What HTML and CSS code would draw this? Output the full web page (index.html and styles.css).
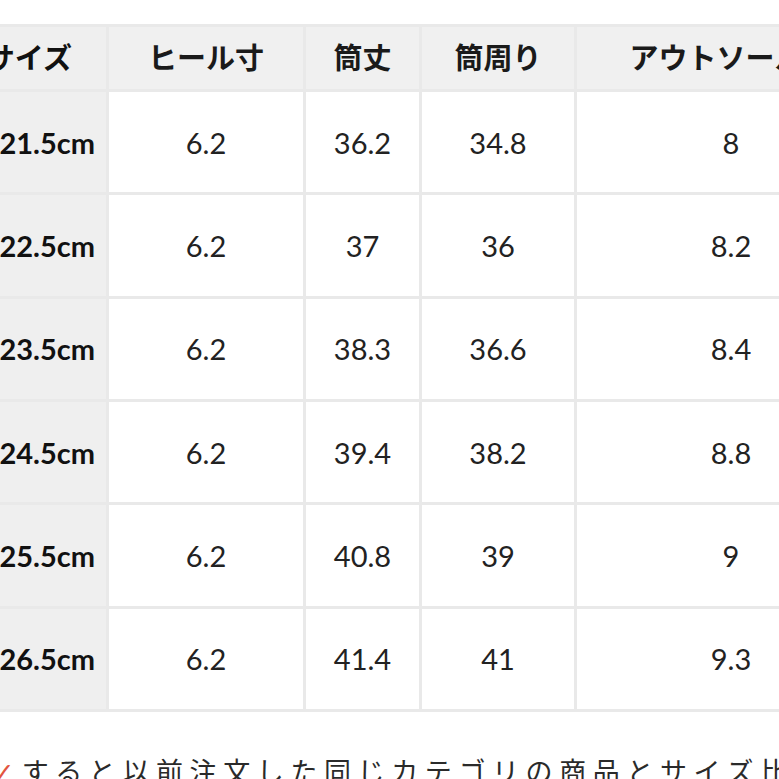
FILE: index.html
```html
<!DOCTYPE html>
<html lang="ja">
<head>
<meta charset="utf-8">
<title>サイズ表</title>
<link rel="stylesheet" href="styles.css">
</head>
<body>
<div class="page">
  <div class="size-table">
    <div class="cell head first">サイズ</div>
    <div class="cell head">ヒール寸</div>
    <div class="cell head">筒丈</div>
    <div class="cell head">筒周り</div>
    <div class="cell head">アウトソール長</div>

    <div class="cell first">21.5cm</div>
    <div class="cell">6.2</div>
    <div class="cell">36.2</div>
    <div class="cell">34.8</div>
    <div class="cell">8</div>

    <div class="cell first">22.5cm</div>
    <div class="cell">6.2</div>
    <div class="cell">37</div>
    <div class="cell">36</div>
    <div class="cell">8.2</div>

    <div class="cell first">23.5cm</div>
    <div class="cell">6.2</div>
    <div class="cell">38.3</div>
    <div class="cell">36.6</div>
    <div class="cell">8.4</div>

    <div class="cell first">24.5cm</div>
    <div class="cell">6.2</div>
    <div class="cell">39.4</div>
    <div class="cell">38.2</div>
    <div class="cell">8.8</div>

    <div class="cell first">25.5cm</div>
    <div class="cell">6.2</div>
    <div class="cell">40.8</div>
    <div class="cell">39</div>
    <div class="cell">9</div>

    <div class="cell first">26.5cm</div>
    <div class="cell">6.2</div>
    <div class="cell">41.4</div>
    <div class="cell">41</div>
    <div class="cell">9.3</div>
  </div>
  <p class="note"><span class="check">✓</span>すると以前注文した同じカテゴリの商品とサイズ比較</p>
</div>
</body>
</html>
```

FILE: styles.css
```css
html, body {
  margin: 0;
  padding: 0;
  background: #ffffff;
  overflow: hidden;
}

.page {
  margin-left: -20px;
  padding-top: 24px;
  width: 1000px;
}

.size-table {
  display: grid;
  grid-template-columns: 123px 194px 113px 152px 308px;
  grid-template-rows: 62px repeat(6, 100.33px);
  gap: 3px;
  padding: 3px;
  width: max-content;
  background: #e9e9e9;
}

.cell {
  background: #ffffff;
  display: flex;
  align-items: center;
  justify-content: center;
  font-family: Lato, "Noto Sans CJK JP", sans-serif;
  font-size: 29px;
  color: #222222;
  white-space: nowrap;
}

.cell.head {
  background: #f0f0f0;
  font-family: "Noto Sans CJK JP", sans-serif;
  font-weight: 700;
  font-size: 29px;
  color: #1a1a1a;
  padding-bottom: 4px;
}

.cell.first {
  background: #efefef;
  justify-content: flex-end;
  font-weight: 700;
  color: #111111;
  padding-right: 11px;
}

.cell.head.first {
  padding-right: 34px;
}

.note {
  margin: 41px 0 0 0;
  padding-left: 12px;
  font-family: "Noto Sans CJK JP", sans-serif;
  font-size: 27px;
  line-height: 36px;
  letter-spacing: 6.6px;
  color: #2a2a2a;
  white-space: nowrap;
}

.check {
  color: #e2553f;
  font-family: "DejaVu Sans", sans-serif;
  letter-spacing: 0;
  margin-right: 7px;
}
```
